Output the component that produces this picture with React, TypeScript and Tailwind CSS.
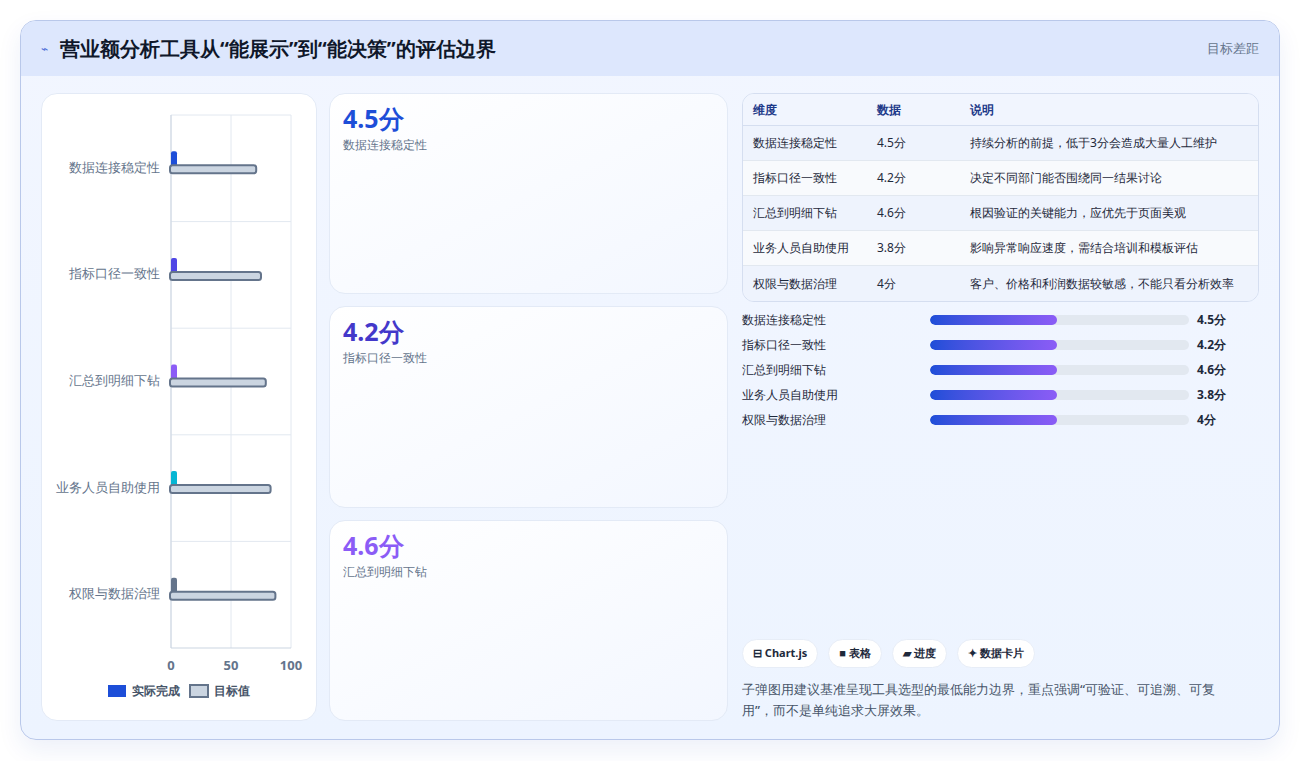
const rows = [
  { name: "数据连接稳定性", score: "4.5分", desc: "持续分析的前提，低于3分会造成大量人工维护", target: 71, color: "#1d4ed8" },
  { name: "指标口径一致性", score: "4.2分", desc: "决定不同部门能否围绕同一结果讨论", target: 75, color: "#4f46e5" },
  { name: "汇总到明细下钻", score: "4.6分", desc: "根因验证的关键能力，应优先于页面美观", target: 79, color: "#8b5cf6" },
  { name: "业务人员自助使用", score: "3.8分", desc: "影响异常响应速度，需结合培训和模板评估", target: 83, color: "#06b6d4" },
  { name: "权限与数据治理", score: "4分", desc: "客户、价格和利润数据较敏感，不能只看分析效率", target: 87, color: "#64748b" },
];

const cards = [
  { value: "4.5分", label: "数据连接稳定性", color: "text-[#1d4ed8]" },
  { value: "4.2分", label: "指标口径一致性", color: "text-[#4338ca]" },
  { value: "4.6分", label: "汇总到明细下钻", color: "text-[#8b5cf6]" },
];

function BulletChart() {
  const x0 = 129, w = 120, top = 21, rowH = 106.6;
  return (
    <svg width="276" height="626" className="block">
      {[0, 50, 100].map(v => (
        <line key={v} x1={x0 + v * 1.2} x2={x0 + v * 1.2} y1={top} y2={top + rowH * 5} stroke="#e2e8f0" />
      ))}
      {[1, 2, 3, 4].map(i => (
        <line key={i} x1={x0} x2={x0 + w} y1={top + rowH * i} y2={top + rowH * i} stroke="#e2e8f0" />
      ))}
      <line x1={x0} x2={x0 + w} y1={top} y2={top} stroke="#e2e8f0" />
      <line x1={x0} x2={x0 + w} y1={top + rowH * 5} y2={top + rowH * 5} stroke="#cbd5e1" />
      <line x1={x0} x2={x0} y1={top} y2={top + rowH * 5} stroke="#cbd5e1" />
      {rows.map((r, i) => {
        const cy = top + rowH * i + rowH / 2;
        return (
          <g key={r.name}>
            <text x={x0 - 11} y={cy} textAnchor="end" fontSize="13" fill="#64748b" dominantBaseline="middle">{r.name}</text>
            <rect x={x0} y={cy - 17} width={6} height={17} rx={2} fill={r.color} />
            <rect x={x0 - 1} y={cy - 3} width={r.target * 1.2 + 1} height={8} rx={2.5} fill="#cbd5e1" stroke="#64748b" strokeWidth="2" />
          </g>
        );
      })}
      {[0, 50, 100].map(v => (
        <text key={v} x={x0 + v * 1.2} y={top + rowH * 5 + 22} textAnchor="middle" fontSize="13" fontWeight="bold" fill="#64748b">{v}</text>
      ))}
      <rect x={66} y={591} width={18} height={12} fill="#1d4ed8" />
      <text x={90} y={601} fontSize="12" fontWeight="bold" fill="#475569">实际完成</text>
      <rect x={148} y={591} width={18} height={12} fill="#cbd5e1" stroke="#64748b" strokeWidth="2" />
      <text x={172} y={601} fontSize="12" fontWeight="bold" fill="#475569">目标值</text>
    </svg>
  );
}

export default function App() {
  return (
    <div className="min-h-screen bg-white p-5 font-['Noto_Sans_CJK_SC','Noto_Sans',sans-serif]">
      <div className="h-[720px] rounded-2xl border border-[#b9c8ea] bg-gradient-to-b from-[#f2f6ff] to-[#edf4ff] shadow-[0_10px_25px_rgba(30,64,175,0.08)] overflow-hidden flex flex-col">
        <div className="h-[55px] shrink-0 bg-[#dde7fd] flex items-center justify-between px-5">
          <div className="flex items-center gap-3">
            <span className="text-[#4f6fd8] text-xs">⌁</span>
            <h1 className="text-[20px] font-bold text-[#0f172a]">营业额分析工具从“能展示”到“能决策”的评估边界</h1>
          </div>
          <span className="text-[13px] text-[#64748b]">目标差距</span>
        </div>
        <div className="flex-1 flex gap-3 px-5 pt-[17px] pb-[19px]">
          <div className="w-[276px] shrink-0 bg-white rounded-2xl border border-[#e3eaf6]">
            <BulletChart />
          </div>
          <div className="w-[399px] shrink-0 flex flex-col gap-3">
            {cards.map(c => (
              <div key={c.value} className="flex-1 rounded-2xl border border-[#e3eaf6] bg-gradient-to-br from-white to-[#f3f7ff] px-[13px] pt-[8px]">
                <div className={`text-[25px] font-bold leading-[32px] ${c.color}`}>{c.value}</div>
                <div className="text-[12px] text-[#64748b] mt-0.5">{c.label}</div>
              </div>
            ))}
          </div>
          <div className="flex-1 flex flex-col ml-[2px]">
            <div className="rounded-xl border border-[#d5def0] overflow-hidden text-[12px]">
              <div className="grid grid-cols-[124px_93px_1fr] h-[32px] items-center px-[10px] bg-[#f1f5fe] border-b border-[#d5def0] font-bold text-[#1e3a8a]">
                <span>维度</span><span>数据</span><span>说明</span>
              </div>
              {rows.map((r, i) => (
                <div key={r.name} className={`grid grid-cols-[124px_81px_1fr] h-[35px] items-center px-[10px] text-[#1e293b] ${i % 2 === 0 ? "bg-[#eef3fd]" : "bg-[#f8fafd]"} ${i < 4 ? "border-b border-[#e2e8f0]" : ""}`}>
                  <span className="font-medium">{r.name}</span>
                  <span>{r.score}</span>
                  <span className="pl-[12px]">{r.desc}</span>
                </div>
              ))}
            </div>
            <div className="mt-[10px] flex flex-col gap-[9px]">
              {rows.map(r => (
                <div key={r.name} className="flex items-center h-[16px] text-[12px]">
                  <span className="w-[188px] text-[#1e293b] font-medium">{r.name}</span>
                  <div className="w-[259px] h-[10px] rounded-full bg-[#e2e8f0] overflow-hidden">
                    <div className="h-full w-[127px] rounded-full bg-gradient-to-r from-[#1d4ed8] to-[#8b5cf6]" />
                  </div>
                  <span className="ml-[8px] font-bold text-[#1e293b]">{r.score}</span>
                </div>
              ))}
            </div>
            <div className="mt-auto flex gap-2.5 text-[11px] font-bold text-[#1e293b]">
              {["⊟ Chart.js", "■ 表格", "▰ 进度", "✦ 数据卡片"].map(t => (
                <span key={t} className="rounded-full bg-white border border-[#e7edf7] px-[10px] h-[29px] flex items-center">{t}</span>
              ))}
            </div>
            <p className="mt-[11px] pr-[14px] text-[13px] leading-[21px] text-[#475569] font-medium">子弹图用建议基准呈现工具选型的最低能力边界，重点强调“可验证、可追溯、可复用”，而不是单纯追求大屏效果。</p>
          </div>
        </div>
      </div>
    </div>
  );
}
